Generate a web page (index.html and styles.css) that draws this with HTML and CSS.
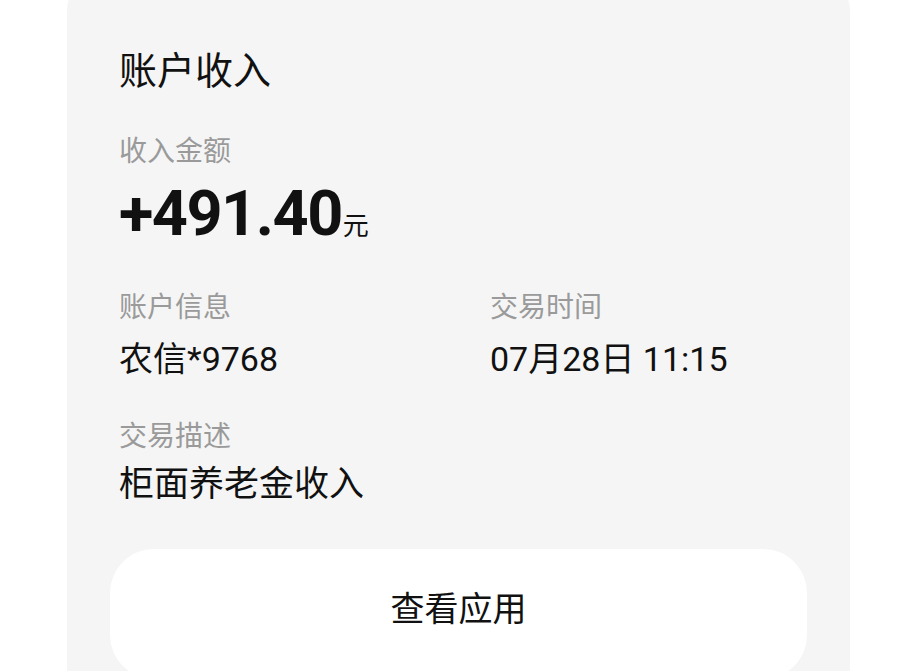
FILE: index.html
```html
<!DOCTYPE html>
<html lang="zh-CN">

<head>
    <meta charset="UTF-8">
    <meta name="viewport" content="width=device-width, initial-scale=1.0">
    <title>账户收入</title>
    <link rel="stylesheet" href="styles.css">
</head>

<body>
    <main class="card">
        <div class="content">
            <h1 class="title">账户收入</h1>

            <div class="label amount-label">收入金额</div>
            <div class="amount">+491.40<span class="unit">元</span></div>

            <div class="info-grid">
                <div class="field">
                    <div class="label">账户信息</div>
                    <div class="value">农信*9768</div>
                </div>
                <div class="field">
                    <div class="label">交易时间</div>
                    <div class="value">07月28日 11:15</div>
                </div>
            </div>

            <div class="field desc">
                <div class="label">交易描述</div>
                <div class="value">柜面养老金收入</div>
            </div>
        </div>

        <button class="open-app">查看应用</button>
    </main>
</body>

</html>
```

FILE: styles.css
```css
html, body {
    margin: 0;
    height: 671px;
    overflow: hidden;
    background: #fff;
}

body {
    font-family: Roboto, "Noto Sans CJK SC", sans-serif;
    color: #111;
}

.card {
    margin: -20px 0 0 67px;
    width: 783px;
    height: 760px;
    box-sizing: border-box;
    padding: 72px 43px 0 43px;
    background: #f5f5f5;
    border-radius: 30px;
}

.content {
    padding-left: 9px;
}

.title {
    margin: 0;
    font-size: 38px;
    line-height: 38px;
    font-weight: 400;
}

.label {
    font-size: 28px;
    line-height: 28px;
    color: #9a9a9a;
}

.amount-label {
    margin-top: 48px;
}

.amount {
    margin-top: 16px;
    font-size: 63px;
    line-height: 64px;
    font-weight: 700;
    letter-spacing: -1.5px;
}

.unit {
    margin-left: 1px;
    font-size: 26px;
    font-weight: 400;
    letter-spacing: 0;
}

.info-grid {
    margin-top: 36px;
    display: grid;
    grid-template-columns: 371px 1fr;
}

.value {
    margin-top: 20px;
    font-size: 34px;
    line-height: 34px;
}

.desc {
    margin-top: 47px;
}

.desc .value {
    margin-top: 16px;
    font-size: 35px;
    line-height: 35px;
}

.open-app {
    display: block;
    margin-top: 47px;
    width: 100%;
    height: 130px;
    padding: 0 0 10px 0;
    border: none;
    border-radius: 44px;
    background: #fff;
    color: #111;
    font-family: inherit;
    font-size: 34px;
    line-height: 34px;
}
```
